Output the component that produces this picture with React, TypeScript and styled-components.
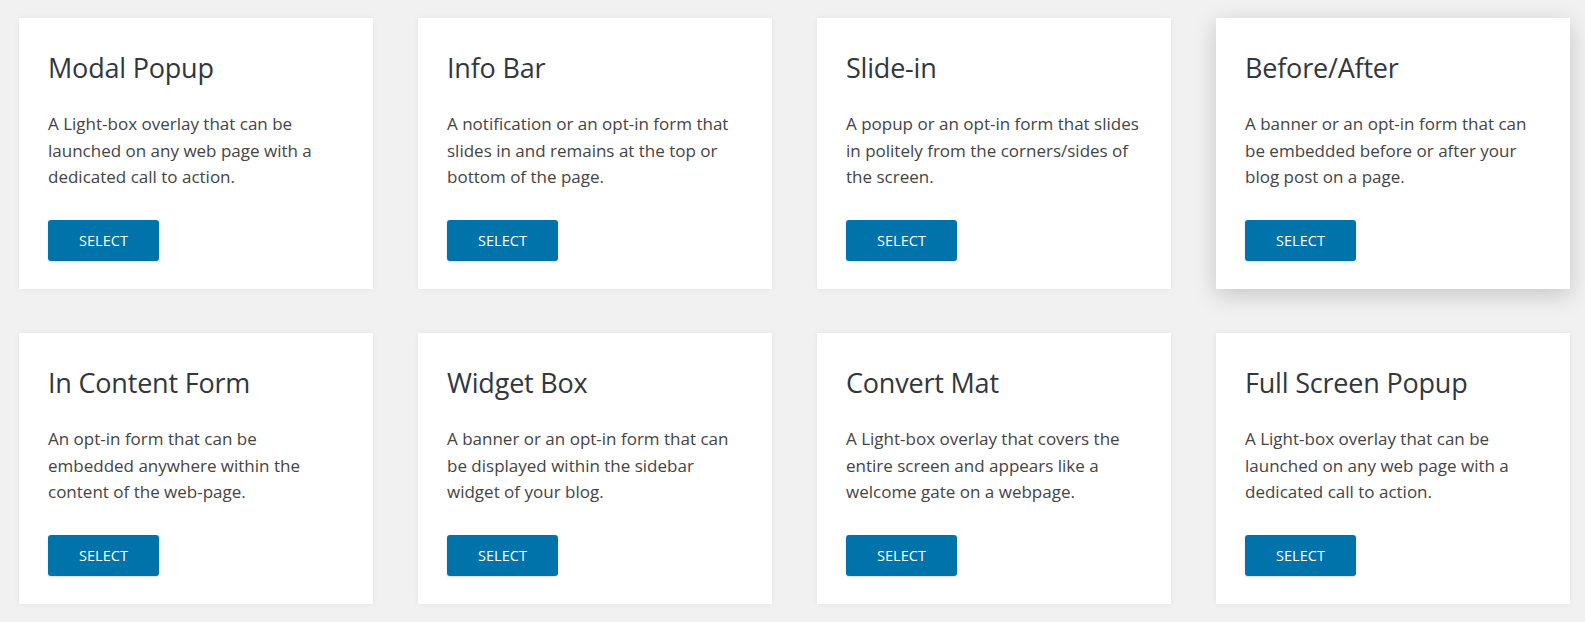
import React from "react";
import styled, { createGlobalStyle } from "styled-components";

const GlobalStyle = createGlobalStyle`
  html, body {
    margin: 0;
    padding: 0;
    background: #f1f1f1;
  }
  body {
    font-family: "Open Sans", "Noto Sans", sans-serif;
  }
`;

const Page = styled.div`
  padding: 18px 16px 18px 19px;
`;

const Grid = styled.div`
  display: grid;
  grid-template-columns: repeat(4, 354px);
  column-gap: 45px;
  row-gap: 44px;
`;

const Card = styled.div<{ $active?: boolean }>`
  background: #fff;
  height: 271px;
  box-sizing: border-box;
  padding: 28px 29px 28px;
  display: flex;
  flex-direction: column;
  box-shadow: ${(p) =>
    p.$active
      ? "0 6px 22px rgba(0, 0, 0, 0.18)"
      : "0 0 6px rgba(0, 0, 0, 0.06)"};
`;

const Title = styled.h3`
  margin: 0;
  font-size: 27px;
  font-weight: 400;
  line-height: 44px;
  color: #32373c;
  letter-spacing: -0.2px;
`;

const Desc = styled.p`
  margin: 21px 0 0;
  font-size: 17px;
  line-height: 26.7px;
  color: #444;
  max-width: 293px;
`;

const SelectButton = styled.button`
  margin-top: auto;
  align-self: flex-start;
  width: 111px;
  height: 41px;
  border: none;
  border-radius: 3px;
  background: #0073aa;
  color: #fff;
  font-family: inherit;
  font-size: 14.5px;
  cursor: pointer;
  box-shadow: 0 1px 2px rgba(0, 0, 0, 0.15);
`;

const templates = [
  {
    title: "Modal Popup",
    desc: "A Light-box overlay that can be launched on any web page with a dedicated call to action.",
  },
  {
    title: "Info Bar",
    desc: "A notification or an opt-in form that slides in and remains at the top or bottom of the page.",
  },
  {
    title: "Slide-in",
    desc: "A popup or an opt-in form that slides in politely from the corners/sides of the screen.",
  },
  {
    title: "Before/After",
    desc: "A banner or an opt-in form that can be embedded before or after your blog post on a page.",
    active: true,
  },
  {
    title: "In Content Form",
    desc: "An opt-in form that can be embedded anywhere within the content of the web-page.",
  },
  {
    title: "Widget Box",
    desc: "A banner or an opt-in form that can be displayed within the sidebar widget of your blog.",
  },
  {
    title: "Convert Mat",
    desc: "A Light-box overlay that covers the entire screen and appears like a welcome gate on a webpage.",
  },
  {
    title: "Full Screen Popup",
    desc: "A Light-box overlay that can be launched on any web page with a dedicated call to action.",
  },
];

export default function App() {
  return (
    <>
      <GlobalStyle />
      <Page>
        <Grid>
          {templates.map((t) => (
            <Card key={t.title} $active={t.active}>
              <Title>{t.title}</Title>
              <Desc>{t.desc}</Desc>
              <SelectButton>SELECT</SelectButton>
            </Card>
          ))}
        </Grid>
      </Page>
    </>
  );
}
